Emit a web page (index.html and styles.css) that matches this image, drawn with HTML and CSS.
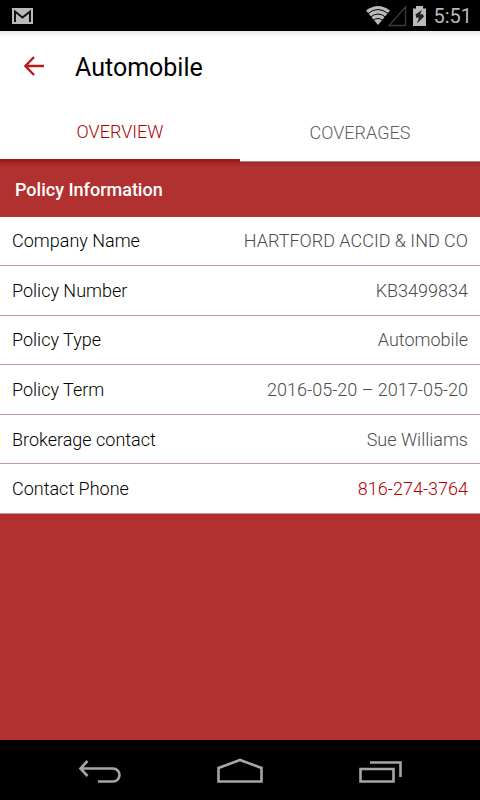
FILE: index.html
```html
<!DOCTYPE html>
<html lang="en">
<head>
  <meta charset="UTF-8">
  <meta name="viewport" content="width=device-width, initial-scale=1">
  <title>Automobile</title>
  <link rel="stylesheet" href="styles.css">
</head>
<body>

<div class="status-bar">
  <svg class="mail-icon" width="21" height="16" viewBox="0 0 21 16">
    <rect width="21" height="16" fill="#bababa"/>
    <path d="M3 14V3.500L10.500 9.500L18 3.500V14" fill="none" stroke="#111" stroke-width="2"/>
  </svg>
  <div class="status-right">
    <svg width="61" height="22" viewBox="0 0 61 22">
      <path d="M0 5.500Q12 -3.500 24 5.500L12 20Z" fill="#bababa"/>
      <path d="M2 8.500Q12 0.500 22 8.500M4.500 12Q12 6 19.500 12M7 15.500Q12 11.500 17 15.500" fill="none" stroke="#000" stroke-width="1"/>
      <path d="M23 20.500H39.500V2Z" fill="none" stroke="#3c3c3c" stroke-width="1.300"/>
      <path d="M47 3.500H50V1H57V3.500H60V21H47Z" fill="#bababa"/>
      <path d="M56 5L49.500 9.500L50.500 13L53 12.500L51 18.500L58 11.500L56.500 9L54 9.500Z" fill="#222"/>
    </svg>
    <span class="clock">5:51</span>
  </div>
</div>

<header class="header">
  <div class="toolbar">
    <button class="back" type="button" aria-label="Back">
      <svg width="20" height="24" viewBox="0 0 20 24" fill="none" stroke="#b71c1c" stroke-width="2.400">
        <path d="M10 1L1.500 10L10 19M1.500 10H20"/>
      </svg>
    </button>
    <h1>Automobile</h1>
  </div>
  <nav class="tabs">
    <button class="tab active" type="button">OVERVIEW</button>
    <button class="tab" type="button">COVERAGES</button>
  </nav>
</header>

<main class="content">
  <h2>Policy Information</h2>
  <table class="policy">
    <tr><th scope="row">Company Name</th><td>HARTFORD ACCID &amp; IND CO</td></tr>
    <tr><th scope="row">Policy Number</th><td>KB3499834</td></tr>
    <tr><th scope="row">Policy Type</th><td>Automobile</td></tr>
    <tr><th scope="row">Policy Term</th><td>2016-05-20 – 2017-05-20</td></tr>
    <tr><th scope="row">Brokerage contact</th><td>Sue Williams</td></tr>
    <tr><th scope="row">Contact Phone</th><td><a href="tel:816-274-3764">816-274-3764</a></td></tr>
  </table>
</main>

<footer class="nav-bar">
  <button type="button" aria-label="Back">
    <svg width="44" height="26" viewBox="0 0 44 26" fill="none" stroke="#a6a6a6" stroke-width="2.600">
      <path d="M9.500 4L2.500 11.500L9.500 19M2.500 11.500H35A6.300 6.300 0 0 1 35 24.500H20"/>
    </svg>
  </button>
  <button type="button" aria-label="Home">
    <svg width="46" height="26" viewBox="0 0 46 26" fill="none" stroke="#a6a6a6" stroke-width="2.600">
      <path d="M1.500 24.500V11L23 3L44.500 11V24.500Z"/>
    </svg>
  </button>
  <button type="button" aria-label="Recent apps">
    <svg width="44" height="26" viewBox="0 0 44 26" fill="none" stroke="#a6a6a6" stroke-width="2.600">
      <path d="M2.500 12H35.500V24.500H2.500ZM12 5.500H42.500V20"/>
    </svg>
  </button>
</footer>

</body>
</html>
```

FILE: styles.css
```css
* {
  box-sizing: border-box;
}

body {
  margin: 0;
  min-height: 100vh;
  display: flex;
  flex-direction: column;
  background-color: #b13131;
  color: #000;
  font-family: Roboto, sans-serif;
  font-size: 18px;
}

button {
  border: none;
  padding: 0;
  background: none;
  font: inherit;
  cursor: pointer;
}

svg {
  display: block;
}

.status-bar {
  display: flex;
  justify-content: space-between;
  align-items: center;
  height: 31px;
  padding: 0 8px 0 12px;
  background-color: #000;
}

.status-right {
  display: flex;
  align-items: center;
  gap: 6px;
}

.clock {
  color: #bababa;
  font-size: 20px;
  line-height: 30px;
}

.header {
  background: linear-gradient(#e8e8e8, #fff 6px);
}

.toolbar {
  display: flex;
  align-items: center;
  gap: 31px;
  height: 73px;
  padding: 0 24px;
}

h1 {
  margin: 0;
  font-size: 25px;
  font-weight: 400;
}

.tabs {
  display: flex;
  height: 58px;
}

.tab {
  flex: 1;
  color: #606060;
  font-weight: 300;
  border-bottom: 1px solid #b08080;
}

.tab.active {
  color: #b00000;
  border-bottom: 3px solid #a01818;
}

.content {
  flex: 1;
}

h2 {
  margin: 0;
  padding: 0 15px;
  color: #fff;
  background: linear-gradient(#9c2a2a, #b13131 5px);
  font-size: 18px;
  font-weight: 500;
  line-height: 55px;
}

.policy {
  width: 100%;
  height: 297px;
  border-collapse: collapse;
  background-color: #fff;
}

.policy th,
.policy td {
  padding: 0 12px;
  font-weight: 300;
  border-bottom: 1px solid #c49a9a;
}

.policy th {
  text-align: left;
}

.policy td {
  color: #4c4c4c;
  text-align: right;
}

.policy a {
  color: #b00000;
  text-decoration: none;
}

.nav-bar {
  display: flex;
  justify-content: center;
  gap: 95px;
  height: 60px;
  background-color: #000;
}
```
